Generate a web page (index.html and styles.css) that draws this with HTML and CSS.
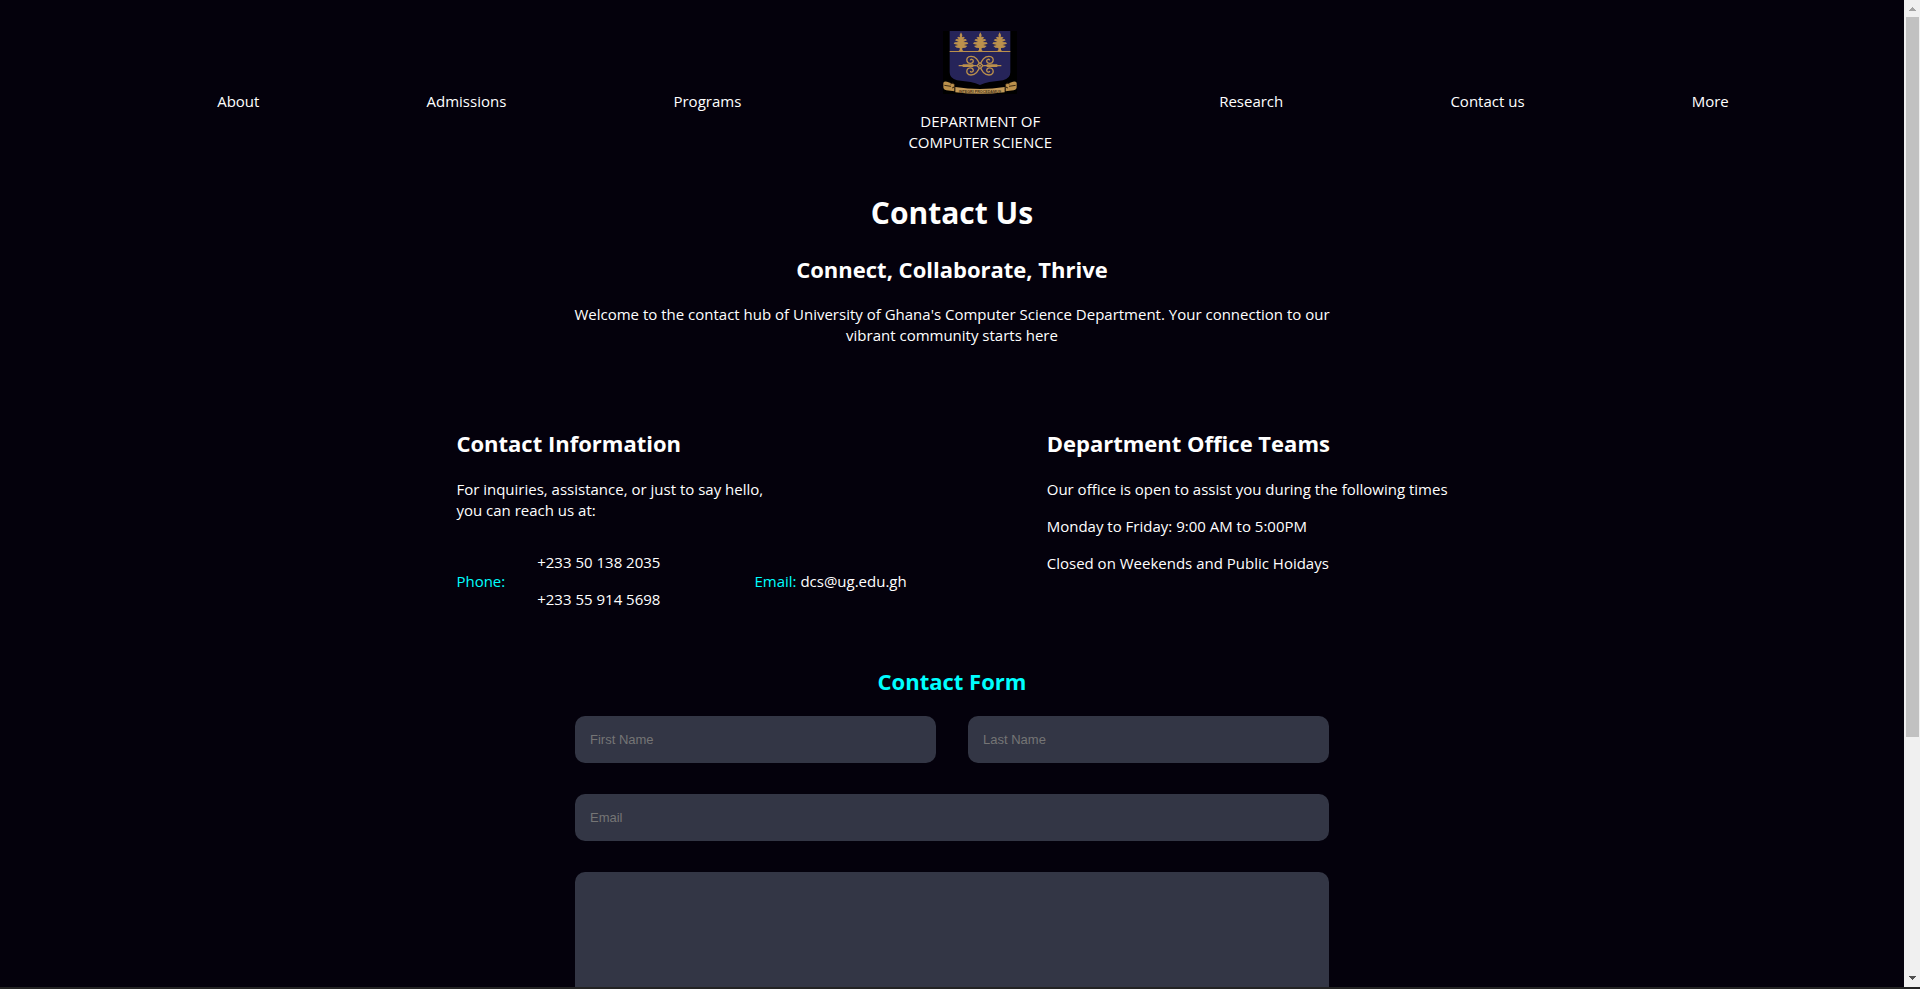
FILE: index.html
```html
<!DOCTYPE html>
<html lang="en">
<head>
<meta charset="utf-8">
<meta name="viewport" content="width=device-width, initial-scale=1">
<title>Contact Us | Department of Computer Science</title>
<link rel="stylesheet" href="styles.css">
</head>
<body>
<div class="window">
  <div class="page">
    <header>
      <nav class="nav">
        <a href="#about">About</a>
        <a href="#admissions">Admissions</a>
        <a href="#programs">Programs</a>
        <a class="brand" href="#home">
          <svg class="crest" viewBox="0 0 222 189" aria-hidden="true">
            <defs>
              <g id="tree">
                <path d="M0 4 L4 12 L3 19 L7 17 L12 20 L6 25 L14 24 L18 28 L7 33 L19 34 L22 38 L9 42 L19 45 L13 50 L4 51 V57 L8 61 H-8 L-4 57 V51 L-13 50 L-19 45 L-9 42 L-22 38 L-19 34 L-7 33 L-18 28 L-14 24 L-6 25 L-12 20 L-7 17 L-3 19 L-4 12 Z"/>
              </g>
              <path id="curl" d="M0 0 C5 -19 15 -28 27 -28 C38 -28 41 -20 39 -13 C36 -4 21 -5 20 -14 C20 -20 28 -21 29 -16"/>
            </defs>
            <rect width="222" height="189" fill="#000"/>
            <path d="M20 0 H202 V124 Q202 143 180 148 L139 153 Q124 156 111 162 Q98 156 83 153 L42 148 Q20 143 20 124 Z" fill="#262459"/>
            <rect x="20" y="60" width="182" height="3" fill="#bb904c"/>
            <g fill="#bb904c">
              <use href="#tree" x="54"/>
              <use href="#tree" x="112"/>
              <use href="#tree" x="170"/>
            </g>
            <g fill="none" stroke="#bb904c" stroke-width="4" transform="translate(111 104)">
              <use href="#curl"/>
              <use href="#curl" transform="scale(-1 1)"/>
              <use href="#curl" transform="scale(1 -1)"/>
              <use href="#curl" transform="scale(-1 -1)"/>
              <path d="M-64 0 H-10 M10 0 H64 M-52 -2 H-20 M20 -2 H52 M-52 2 H-20 M20 2 H52"/>
              <path d="M0 -9 L9 0 L0 9 L-9 0 Z" fill="#262459"/>
            </g>
            <circle cx="111" cy="104" r="3" fill="#bb904c"/>
            <path d="M1 155 Q4 150 12 152 L34 160 V181 L10 178 Q0 176 1 165 Z M221 155 Q218 150 210 152 L188 160 V181 L212 178 Q222 176 221 165 Z" fill="#bb904c"/>
            <path d="M37 168 Q111 180 185 168 V184 Q111 193 37 184 Z" fill="#c49a58"/>
            <path d="M22 159 Q30 153 35 161 Q36 171 27 171 M200 159 Q192 153 187 161 Q186 171 195 171 M4 163 L24 166 M218 163 L198 166" fill="none" stroke="#3c2a12" stroke-width="3"/>
            <text class="motto" x="111" y="185" text-anchor="middle">INTEGRI PROCEDAMUS</text>
          </svg>
          <span>DEPARTMENT OF<br>COMPUTER SCIENCE</span>
        </a>
        <a href="#research">Research</a>
        <a href="#contact">Contact us</a>
        <a href="#more">More</a>
      </nav>
    </header>
    <main>
      <section class="intro">
        <h1>Contact Us</h1>
        <h2>Connect, Collaborate, Thrive</h2>
        <p>Welcome to the contact hub of University of Ghana's Computer Science Department. Your connection to our vibrant community starts here</p>
      </section>
      <div class="details">
        <section>
          <h2>Contact Information</h2>
          <p class="lead">For inquiries, assistance, or just to say hello, you can reach us at:</p>
          <div class="reach">
            <span class="label">Phone:</span>
            <div class="numbers">
              <p>+233 50 138 2035</p>
              <p>+233 55 914 5698</p>
            </div>
            <p class="email"><span class="label">Email:</span> dcs@ug.edu.gh</p>
          </div>
        </section>
        <section>
          <h2>Department Office Teams</h2>
          <p>Our office is open to assist you during the following times</p>
          <p>Monday to Friday: 9:00 AM to 5:00PM</p>
          <p>Closed on Weekends and Public Hoidays</p>
        </section>
      </div>
      <form class="form">
        <h2>Contact Form</h2>
        <div class="names">
          <input type="text" placeholder="First Name" aria-label="First Name">
          <input type="text" placeholder="Last Name" aria-label="Last Name">
        </div>
        <input type="email" placeholder="Email" aria-label="Email">
        <textarea aria-label="Message"></textarea>
      </form>
    </main>
  </div>
  <div class="scrollbar" aria-hidden="true">
    <svg class="arrow" viewBox="0 0 7 4"><path d="M3 0h1v1h1v1h1v1h1v1H0V3h1V2h1V1h1z" fill="#a3a3a3"/></svg>
    <div class="track"><div class="thumb"></div></div>
    <svg class="arrow" viewBox="0 0 7 4"><path d="M0 0h7v1H6v1H5v1H4v1H3V3H2V2H1V1H0z" fill="#505050"/></svg>
  </div>
</div>
</body>
</html>
```
FILE: styles.css
```css
* {
  box-sizing: border-box;
}

body {
  margin: 0;
  background: #232323;
  color: #fff;
  font-family: "Segoe UI", "Open Sans", "Noto Sans", sans-serif;
  font-size: 15px;
  line-height: 21px;
}

.window {
  display: flex;
  height: calc(100vh - 2px);
  overflow: hidden;
}

.page {
  flex: 1;
  min-width: 0;
  overflow: hidden;
  background: #04010c;
}

h1, h2, p {
  margin: 0;
}

h1 {
  font-size: 30px;
  line-height: 43px;
}

h2 {
  font-size: 22px;
  line-height: 32px;
}

.nav {
  display: flex;
  align-items: center;
  justify-content: space-evenly;
  padding: 31px 8px 34px 50px;
}

.nav a {
  padding-top: 14px;
  color: #fff;
  text-decoration: none;
}

.nav .brand {
  display: flex;
  flex-direction: column;
  align-items: center;
  gap: 17px;
  padding: 0 0 4px;
  text-align: center;
}

.crest {
  width: 74px;
  height: 63px;
}

.motto {
  font: bold 11px "Liberation Sans", sans-serif;
  fill: #4a3418;
}

.intro {
  display: flex;
  flex-direction: column;
  align-items: center;
  gap: 19px;
  max-width: 768px;
  margin: 0 auto;
  text-align: center;
}

.details {
  display: flex;
  justify-content: center;
  gap: 140px;
  margin-top: 81px;
}

.details section {
  display: flex;
  flex-direction: column;
  gap: 16px;
}

.details h2 {
  margin-bottom: 4px;
}

.lead {
  max-width: 320px;
}

.reach {
  display: flex;
  align-items: center;
  padding-top: 15px;
}

.numbers {
  display: flex;
  flex-direction: column;
  gap: 16px;
  margin: 0 94px 0 32px;
}

.label {
  color: #00ffff;
}

.form {
  display: flex;
  flex-direction: column;
  gap: 31px;
  max-width: 754px;
  margin: 55px auto 0;
}

.form h2 {
  margin-bottom: -12px;
  color: #00ffff;
  text-align: center;
}

.names {
  display: grid;
  grid-template-columns: 1fr 1fr;
  gap: 32px;
}

.form input,
.form textarea {
  width: 100%;
  padding: 15px;
  border: 0;
  border-radius: 10px;
  background: #333645;
  color: #fff;
  font: 13px/17px "Liberation Sans", Arial, sans-serif;
}

.form input {
  height: 47px;
}

.form textarea {
  height: 200px;
  resize: none;
}

.form input::placeholder {
  color: #757575;
}

.scrollbar {
  display: flex;
  flex-direction: column;
  align-items: center;
  width: 16px;
  padding: 7px 1px 7px 2px;
  background: #f0f0f0;
}

.arrow {
  width: 7px;
  height: 4px;
}

.track {
  flex: 1;
  width: 100%;
  margin: 6px 0;
}

.thumb {
  height: 75.5%;
  background: #c1c1c1;
}
```
